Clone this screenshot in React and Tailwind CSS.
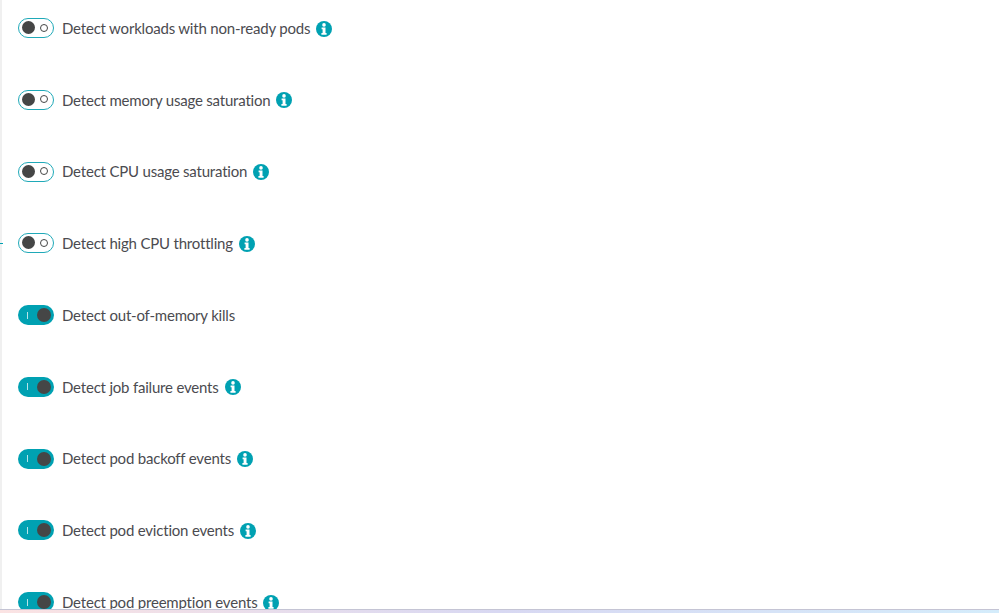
import React from 'react';

const rows = [
  { label: 'Detect workloads with non-ready pods', on: false, info: true },
  { label: 'Detect memory usage saturation', on: false, info: true },
  { label: 'Detect CPU usage saturation', on: false, info: true },
  { label: 'Detect high CPU throttling', on: false, info: true },
  { label: 'Detect out-of-memory kills', on: true, info: false },
  { label: 'Detect job failure events', on: true, info: true },
  { label: 'Detect pod backoff events', on: true, info: true },
  { label: 'Detect pod eviction events', on: true, info: true },
  { label: 'Detect pod preemption events', on: true, info: true },
];

function InfoIcon() {
  return (
    <svg width="16" height="16" viewBox="0 0 16 16" className="shrink-0 ml-[6px] mt-[1px]">
      <circle cx="8" cy="8" r="8" fill="#00a1b2" />
      <circle cx="8" cy="3.9" r="1.8" fill="#fff" />
      <path d="M5.6 6.4h3.9v5.5h1.1v1.8H5.4v-1.8h1.2V8.2h-1z" fill="#fff" />
    </svg>
  );
}

function Toggle({ on }) {
  if (on) {
    return (
      <div className="w-[36px] h-[20px] shrink-0 rounded-full bg-[#00a1b2] flex items-center justify-between pl-[9px] pr-[3px]">
        <span className="w-px h-[7px] bg-[#b8e4e9]" />
        <span className="w-[14px] h-[14px] rounded-full bg-[#454646]" />
      </div>
    );
  }
  return (
    <div className="w-[36px] h-[20px] shrink-0 rounded-full bg-white border-[1.5px] border-[#1fa9b8] flex items-center justify-between pl-[2.5px] pr-[5px] pb-px">
      <span className="w-[13px] h-[13px] rounded-full bg-[#454646]" />
      <span className="w-[8px] h-[8px] rounded-full border border-[#454646]" />
    </div>
  );
}

export default function App() {
  return (
    <div className="relative flex flex-col w-[999px] h-[613px] overflow-hidden bg-white font-['Lato','Noto_Sans',sans-serif]">
      {/* little tick on the left edge */}
      <div className="absolute left-0 top-[243px] w-[3px] h-px bg-[#00a1b2]" />

      <div className="flex-1 min-h-0 overflow-hidden border-l-2 border-[#f0f0f0] pl-4 pt-4">
        <div className="flex flex-col gap-[47.75px]">
          {rows.map((row) => (
            <div key={row.label} className="flex items-center h-6">
              <Toggle on={row.on} />
              <span className="ml-2 text-[15px] tracking-[-0.2px] text-[#4b4b50] whitespace-nowrap">{row.label}</span>
              {row.info && <InfoIcon />}
            </div>
          ))}
        </div>
      </div>

      {/* window edge at the bottom */}
      <div className="shrink-0 h-[4px] border-t border-[#c4c4d4] bg-gradient-to-r from-[#fbe3e3] via-[#d8d8f2] to-[#d4ecfb]" />
    </div>
  );
}
